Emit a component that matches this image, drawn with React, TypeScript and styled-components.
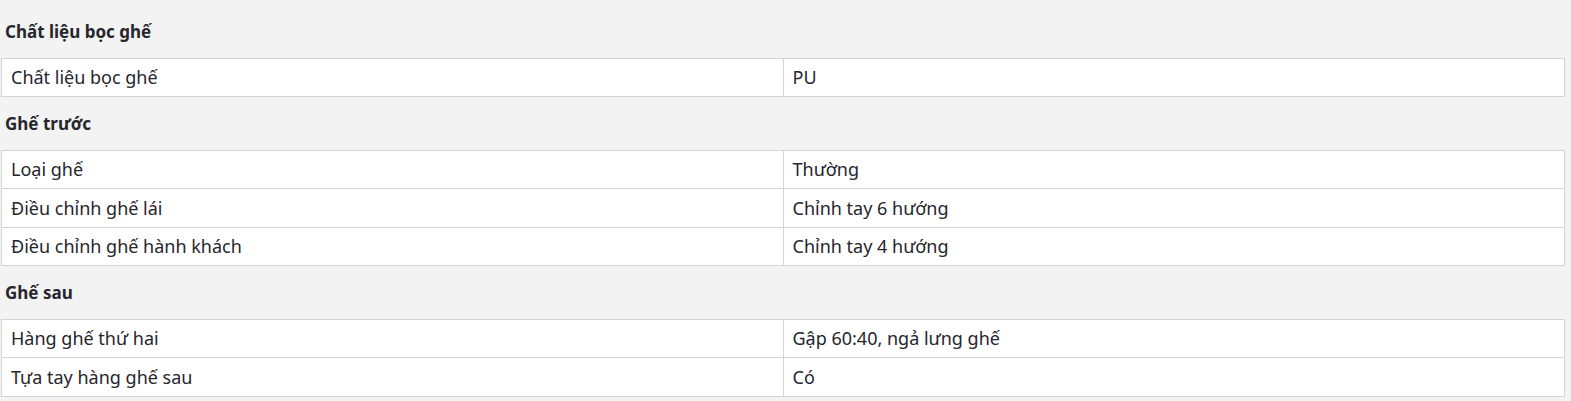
import React from "react";
import styled, { createGlobalStyle } from "styled-components";

const Global = createGlobalStyle`
  html, body { margin: 0; padding: 0; background: #f3f3f3; }
  body { font-family: "Noto Sans", "Open Sans", sans-serif; color: #282830; }
`;

const Page = styled.div`
  padding: 5px 6px 0 1px;
`;

const Heading = styled.h3`
  margin: 0;
  height: 52.5px;
  display: flex;
  align-items: center;
  padding-left: 4px;
  font-size: 17px;
  font-weight: 700;
  color: #26262d;
`;

const Table = styled.table`
  width: 100%;
  border-collapse: collapse;
  table-layout: fixed;
  background: #fff;
`;

const Cell = styled.td`
  border: 1px solid #d4d4d4;
  height: 38.5px;
  padding: 0 9px;
  font-size: 18px;
  line-height: 24px;
  box-sizing: border-box;
  color: #26262d;
`;

type Section = { title: string; rows: [string, string][] };

const data: Section[] = [
  { title: "Chất liệu bọc ghế", rows: [["Chất liệu bọc ghế", "PU"]] },
  {
    title: "Ghế trước",
    rows: [
      ["Loại ghế", "Thường"],
      ["Điều chỉnh ghế lái", "Chỉnh tay 6 hướng"],
      ["Điều chỉnh ghế hành khách", "Chỉnh tay 4 hướng"],
    ],
  },
  {
    title: "Ghế sau",
    rows: [
      ["Hàng ghế thứ hai", "Gập 60:40, ngả lưng ghế"],
      ["Tựa tay hàng ghế sau", "Có"],
    ],
  },
];

export default function App() {
  return (
    <Page>
      <Global />
      {data.map((s) => (
        <React.Fragment key={s.title}>
          <Heading>{s.title}</Heading>
          <Table>
            <tbody>
              {s.rows.map(([k, v]) => (
                <tr key={k}>
                  <Cell>{k}</Cell>
                  <Cell>{v}</Cell>
                </tr>
              ))}
            </tbody>
          </Table>
        </React.Fragment>
      ))}
    </Page>
  );
}
